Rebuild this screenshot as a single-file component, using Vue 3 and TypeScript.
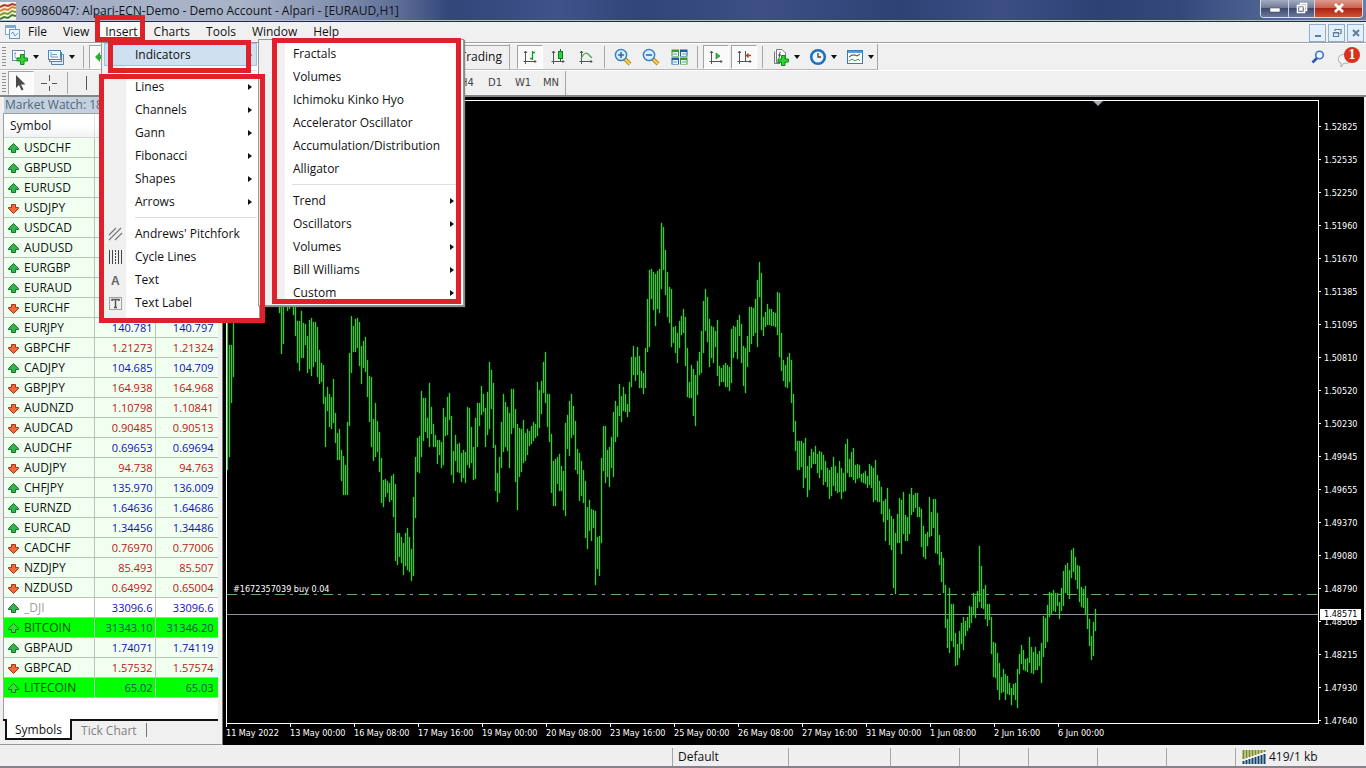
<script setup lang="ts">
type Row = { symbol: string; up: boolean; bid: string; ask: string; tone?: 'muted' | 'lit' }

const row = (symbol: string, up: boolean, bid = '', ask = '', tone?: Row['tone']): Row => ({ symbol, up, bid, ask, tone })

const rows: Row[] = [
  row('USDCHF', true), row('GBPUSD', true), row('EURUSD', true), row('USDJPY', false),
  row('USDCAD', true), row('AUDUSD', true), row('EURGBP', true), row('EURAUD', true),
  row('EURCHF', false),
  row('EURJPY', true, '140.781', '140.797'),
  row('GBPCHF', false, '1.21273', '1.21324'),
  row('CADJPY', true, '104.685', '104.709'),
  row('GBPJPY', false, '164.938', '164.968'),
  row('AUDNZD', false, '1.10798', '1.10841'),
  row('AUDCAD', false, '0.90485', '0.90513'),
  row('AUDCHF', true, '0.69653', '0.69694'),
  row('AUDJPY', false, '94.738', '94.763'),
  row('CHFJPY', true, '135.970', '136.009'),
  row('EURNZD', true, '1.64636', '1.64686'),
  row('EURCAD', true, '1.34456', '1.34486'),
  row('CADCHF', false, '0.76970', '0.77006'),
  row('NZDJPY', false, '85.493', '85.507'),
  row('NZDUSD', false, '0.64992', '0.65004'),
  row('_DJI', true, '33096.6', '33096.6', 'muted'),
  row('BITCOIN', true, '31343.10', '31346.20', 'lit'),
  row('GBPAUD', true, '1.74071', '1.74119'),
  row('GBPCAD', false, '1.57532', '1.57574'),
  row('LITECOIN', true, '65.02', '65.03', 'lit'),
]

const menuBar = ['File', 'View', 'Insert', 'Charts', 'Tools', 'Window', 'Help']
const shapeItems = ['Lines', 'Channels', 'Gann', 'Fibonacci', 'Shapes', 'Arrows']
const toolItems = ["Andrews' Pitchfork", 'Cycle Lines', 'Text', 'Text Label']
const indicators = ['Fractals', 'Volumes', 'Ichimoku Kinko Hyo', 'Accelerator Oscillator', 'Accumulation/Distribution', 'Alligator']
const indicatorGroups = ['Trend', 'Oscillators', 'Volumes', 'Bill Williams', 'Custom']
const frames = ['H4', 'D1', 'W1', 'MN']

const prices = ['1.52825', '1.52535', '1.52250', '1.51960', '1.51670', '1.51385', '1.51095', '1.50810', '1.50520', '1.50230',
  '1.49945', '1.49655', '1.49370', '1.49080', '1.48790', '1.48505', '1.48215', '1.47930', '1.47640']
const times = ['11 May 2022', '13 May 00:00', '16 May 08:00', '17 May 16:00', '19 May 00:00', '20 May 08:00', '23 May 16:00',
  '25 May 00:00', '26 May 08:00', '27 May 16:00', '31 May 00:00', '1 Jun 08:00', '2 Jun 16:00', '6 Jun 00:00']

// High-low pairs per hour, two pixels apart; each run starts at its own x.
const runs: [number, string][] = [
  [227, '310-470 345-457 345-403 310-377'],
  [279, '290-313 290-354 290-344 290-306 290-311 290-309 290-306 306-315 290-336 321-363 321-371 311-358 323-358 324-345 336-373 320-369 318-376 322-367 322-362 327-377 350-384 363-382 365-404 397-447 387-411 394-427 397-429 379-423 413-443 433-460 429-460 450-481 456-495 465-495 422-495 353-426 316-373 326-352 319-352 318-348 322-366 346-384 341-368 337-372 360-397 376-422 377-447 419-461 403-457 421-452 432-472 458-503 480-507 479-497 481-493 483-502 476-500 474-517 484-561 533-565 533-557 537-563 543-575 533-566 528-570 537-572 549-581 497-576 457-518 438-472 436-473 391-457 398-441 398-432 418-438 383-447 407-434 424-447 435-447 440-464 440-455 442-468 408-465 417-436 397-435 393-420 416-475'],
  [453, '451-483 435-461 444-472 443-473 453-482 450-478 452-483 407-465 408-468 427-463 447-480 418-479 403-447 403-426 386-415 394-412 408-447 392-435 362-429 370-409 383-448 445-491 473-502 457-493 422-468 394-452 402-447 407-451 413-468 389-434 389-428 409-482 424-510 428-477 429-472 420-463 433-461 429-455 431-446 426-444 422-441 424-438 382-436 390-428 381-414 362-393 352-403 394-427 394-442 434-493 461-506 459-506 457-484 454-491 466-491 471-510 423-516 415-449 401-456 394-438 406-435 421-470 449-474 453-501 461-496 470-503 481-538 507-549 500-531 509-541 510-528 511-585 537-569 536-576 458-543 426-471 426-483 450-477 447-487 437-468 412-477 401-442 406-437 384-416 396-422 387-411 394-412 404-417 382-412 357-387 346-375 357-381 347-375 356-388 371-388 373-394 348-388 299-352 270-347 269-299 272-310 274-326 271-309 269-313 223-289 227-270 250-295 272-317 287-323 289-347 327-343 326-353 333-363 321-348 316-335 309-333 317-366 348-397 382-398 365-398 369-416 375-426 361-395 352-375 331-373 301-353 289-331 297-342 319-367 326-358 327-363 331-347 320-376 366-386 368-382 365-382 363-387 365-387 367-391 329-383 326-358 327-352 320-359 315-336 324-363 346-386 348-393 336-367 307-352 307-344 308-336 299-333 280-347 262-297 273-330 317-336 312-327 304-325 309-325 309-326 312-326 313-327 292-335 293-357 333-371 360-381 365-387 357-388 353-382 360-403 394-432 421-451 441-470 441-470 441-467 443-488 438-478 466-497 456-490 449-468 452-464 446-464 454-473 451-478 452-470 455-485 461-482 468-487 470-499 467-496 457-486 466-491 473-493 461-492 468-499 473-492 444-491 439-473 459-477 452-477 448-480 465-483 464-479 465-478 474-482 473-483 471-484 476-488 464-485 466-488 468-502 460-500 475-502 481-502 487-514 501-522 499-541 488-520 509-545 516-550 519-588 533-594 514-543 498-543 500-554 492-534 515-541 517-541 494-534 488-515 495-512 493-508 493-517 507-517 509-547 526-557 534-559 532-546 497-537 512-536 499-528 499-553 513-554 535-565 552-582 558-593 585-628 619-648 588-653 604-641 604-647 633-666 644-665 631-658 623-644 617-650 621-636 617-631 606-628 607-623 593-615 596-618 591-608 546-602 566-608 589-609 585-619 604-626 604-620 617-654 642-677 643-678 653-690 663-700 677-693 669-692 674-700 676-694 683-695 688-705 684-695 683-700 669-708 654-674 645-664 650-670 659-671 658-672 637-663 647-673 652-674 647-670 654-670 651-666 643-683 616-657 618-648 605-642 592-617 593-614 590-611 593-612 593-606 602-619 588-611 571-606 565-593 563-594 570-599 550-578 548-572 557-580 565-589 566-602 587-607 589-608 586-614 598-629 619-646 636-660 622-656 609-631'],
]

const bars = runs
  .map(([start, data]) => data.split(' ').map((pair, i) => {
    const [high, low] = pair.split('-')
    return `M${start + i * 2} ${high}h1V${low}h-1Z`
  }).join(''))
  .join('')
</script>

<template>
  <div class="app">
    <header class="title-bar">
      <svg class="logo" width="16" height="18" viewBox="0 0 16 18">
        <rect width="16" height="18" fill="#f6f3e4" />
        <g fill="none" stroke-width="2">
          <path d="M0 5l4-2 4 1 4-2 4 1" stroke="#b03a2c" />
          <path d="M0 9l4-2 4 1 4-3 4 1" stroke="#d8822f" />
          <path d="M0 13l4-2 4 1 4-3 4 1" stroke="#7f9a2c" />
          <path d="M0 17l4-2 4 1 4-3 4 1" stroke="#3f7d35" />
        </g>
      </svg>
      <span class="title">60986047: Alpari-ECN-Demo - Demo Account - Alpari - [EURAUD,H1]</span>
      <div class="win-buttons">
        <button class="min" aria-label="Minimize"><svg width="12" height="12" viewBox="0 0 12 12"><rect x="1" y="6" width="10" height="4" fill="#fff" stroke="#4a5064" stroke-width=".6" /></svg></button>
        <button class="max" aria-label="Restore"><svg width="12" height="12" viewBox="0 0 12 12"><path d="M4.500 3V1.500H10.500V8.500H9M1.500 3.500H8.500V10.500H1.500ZM4 6H6V8H4Z" fill="none" stroke="#fff" stroke-width="1.600" /></svg></button>
        <button class="close" aria-label="Close"><svg width="12" height="12" viewBox="0 0 12 12"><path d="M2 2L10 10M10 2L2 10" stroke="#fff" stroke-width="2.600" /></svg></button>
      </div>
    </header>

    <nav class="menu-bar">
      <svg class="doc-icon" width="15" height="15" viewBox="0 0 15 15">
        <rect x=".5" y=".5" width="10" height="9" fill="#fff" stroke="#7fa8cc" />
        <path d="M1 2H10" stroke="#7fa8cc" stroke-width="2" />
        <rect x="4.500" y="4.500" width="10" height="9" fill="#eaf4fc" stroke="#6c9ac4" />
        <path d="M6 9l2-2 2 4 3-3" fill="none" stroke="#6c9ac4" />
      </svg>
      <button v-for="m in menuBar" :key="m" :class="{ active: m === 'Insert' }">{{ m }}</button>
      <div class="mdi">
        <button aria-label="Minimize chart"><svg width="10" height="10" viewBox="0 0 10 10"><path d="M2 8H8" stroke="#5f7d99" stroke-width="2" /></svg></button>
        <button aria-label="Restore chart"><svg width="10" height="10" viewBox="0 0 10 10"><path d="M3 3V1.500H9V5.500H7.500M1.500 4.500H6.500V8.500H1.500ZM1.500 5H6.500" fill="none" stroke="#5f7d99" stroke-width="1.200" /></svg></button>
        <button aria-label="Close chart"><svg width="10" height="10" viewBox="0 0 10 10"><path d="M2 2L8 8M8 2L2 8" stroke="#5f7d99" stroke-width="2" /></svg></button>
      </div>
    </nav>

    <div class="toolbars">
      <div class="toolbar main">
        <div class="group file-group">
          <span class="grip"></span>
          <button class="drop" aria-label="New chart">
            <svg width="18" height="16" viewBox="0 0 18 16"><rect x="1.500" y="1.500" width="12" height="10" fill="#fff" stroke="#5d8cb8" /><path d="M4 3V9H12M3 4.500H5M10 8L11 9" fill="none" stroke="#8aa9c6" /><path d="M9.500 5.500H13V9H16.500V12H13V15.500H9.500V12H6V9H9.500Z" fill="#2fd52f" stroke="#0d8a1c" /></svg>
            <i class="caret"></i>
          </button>
          <button class="drop" aria-label="Profiles">
            <svg width="18" height="16" viewBox="0 0 18 16"><path d="M4.500 11V15.500H16.500V5.500H14" fill="#dcecf8" stroke="#5484ae" /><rect x="2.500" y="3.500" width="12" height="9" fill="#f4faff" stroke="#5484ae" /><rect x="1.500" y="1.500" width="12" height="9" fill="#f4faff" stroke="#5484ae" /><path d="M4 3V8H11M5 5.500H10" fill="none" stroke="#6a9ac6" /></svg>
            <i class="caret"></i>
          </button>
          <i class="rule"></i>
          <button class="pressed peek" aria-label="Market Watch"><svg width="16" height="16" viewBox="0 0 16 16"><path d="M1 8L6 3V6H10V10H6V13Z" fill="#28b02c" /></svg></button>
          <button class="trading">Trading</button>
        </div>
        <div class="group chart-group">
          <span class="grip"></span>
          <button class="pressed" aria-label="Bar chart"><svg width="16" height="16" viewBox="0 0 16 16"><path d="M3.500 2V15M1.500 12.500H14M2 4L3.500 2L5 4M12.500 11L14 12.500L12.500 14" fill="none" stroke="#555" /><path d="M10.500 2V11M8 9.500H10M11 3.500H13" stroke="#149a2c" stroke-width="1.300" /></svg></button>
          <button aria-label="Candlesticks"><svg width="16" height="16" viewBox="0 0 16 16"><path d="M3.500 2V15M1.500 12.500H14M2 4L3.500 2L5 4M12.500 11L14 12.500L12.500 14" fill="none" stroke="#555" /><path d="M10.500 0V12" stroke="#0b7a1a" /><rect x="8.500" y="2.500" width="4" height="7" fill="#2bd33a" stroke="#0b7a1a" /></svg></button>
          <button aria-label="Line chart"><svg width="16" height="16" viewBox="0 0 16 16"><path d="M3.500 2V15M1.500 12.500H14M2 4L3.500 2L5 4M12.500 11L14 12.500L12.500 14" fill="none" stroke="#555" /><path d="M3 10C6 3 9 3 11 6L14 9" fill="none" stroke="#4aa35a" stroke-width="1.300" /></svg></button>
          <i class="rule"></i>
          <button aria-label="Zoom in"><svg width="18" height="18" viewBox="0 0 18 18"><path d="M11 11L16 16" stroke="#b98a1d" stroke-width="4" /><path d="M11 11L16 16" stroke="#f2d056" stroke-width="2.200" /><circle cx="7" cy="7" r="5.600" fill="#d8efff" stroke="#3c80c4" stroke-width="1.500" /><path d="M4 7H10M7 4V10" stroke="#2b6cb4" stroke-width="1.600" /></svg></button>
          <button aria-label="Zoom out"><svg width="18" height="18" viewBox="0 0 18 18"><path d="M11 11L16 16" stroke="#b98a1d" stroke-width="4" /><path d="M11 11L16 16" stroke="#f2d056" stroke-width="2.200" /><circle cx="7" cy="7" r="5.600" fill="#d8efff" stroke="#3c80c4" stroke-width="1.500" /><path d="M4 7H10" stroke="#2b6cb4" stroke-width="1.600" /></svg></button>
          <button aria-label="Tile windows"><svg width="17" height="16" viewBox="0 0 17 16"><path d="M.5 .5H8V7.500H.5ZM9 8.500H16.500V15.500H9Z" fill="#3d9a2c" /><path d="M9 .5H16.500V7.500H9ZM.5 8.500H8V15.500H.5Z" fill="#1f5fa0" /><path d="M1.500 3H7V7H1.500ZM10 3H15.500V7H10ZM1.500 11H7V15H1.500ZM10 11H15.500V15H10Z" fill="#e8f2f8" /><path d="M2 5H6M11 5H15M2 13H6M11 13H15" stroke="#6fa0b8" /></svg></button>
          <i class="rule"></i>
          <button class="pressed" aria-label="Auto scroll"><svg width="16" height="16" viewBox="0 0 16 16"><path d="M3.500 2V15M1.500 12.500H14M2 4L3.500 2L5 4M12.500 11L14 12.500L12.500 14" fill="none" stroke="#555" /><path d="M8 4L12 7L8 10Z" fill="#2bc03a" stroke="#0b7a1a" stroke-width=".6" /></svg></button>
          <button class="pressed" aria-label="Chart shift"><svg width="16" height="16" viewBox="0 0 16 16"><path d="M3.500 2V15M1.500 12.500H15M2 4L3.500 2L5 4M13.500 11L15 12.500L13.500 14M9.500 2V12" fill="none" stroke="#555" /><path d="M15 6.500H11M12.500 4.500L10.500 6.500L12.500 8.500" fill="none" stroke="#b4441c" stroke-width="1.300" /></svg></button>
          <i class="rule"></i>
          <button class="drop" aria-label="Indicators"><svg width="18" height="18" viewBox="0 0 18 18"><path d="M4.500 1.500H10L13.500 5V14.500H4.500Z" fill="#fff" stroke="#777" /><path d="M2.500 3.500V15.500H8" fill="none" stroke="#777" /><path d="M9 4C7 4 8 7 7 10M6 7H9" fill="none" stroke="#444" /><path d="M9.500 7.500H13V11H16.500V14H13V17.500H9.500V14H6V11H9.500Z" fill="#2fd52f" stroke="#0d8a1c" /></svg><i class="caret"></i></button>
          <button class="drop" aria-label="Periods"><svg width="18" height="18" viewBox="0 0 18 18"><circle cx="9" cy="9" r="6.800" fill="#e8f5ff" stroke="#1f6fc0" stroke-width="2.600" /><path d="M9 5V9H12" fill="none" stroke="#5a3a20" stroke-width="1.300" /></svg><i class="caret"></i></button>
          <button class="drop" aria-label="Templates"><svg width="18" height="18" viewBox="0 0 18 18"><rect x="1.500" y="2.500" width="15" height="13" fill="#fff" stroke="#3d78b0" /><path d="M2 4H16" stroke="#5c9ad2" stroke-width="2" /><path d="M3 9L6 7H9L11 8L14 6" fill="none" stroke="#333" /><path d="M3 13L6 11L9 13L12 11L14 13" fill="none" stroke="#2f9a5a" /></svg><i class="caret"></i></button>
        </div>
        <div class="right-tools">
          <button aria-label="Search"><svg width="14" height="14" viewBox="0 0 14 14"><path d="M6 8L1.500 12.500" stroke="#2c55b0" stroke-width="2.600" /><circle cx="8.500" cy="5" r="3.800" fill="#eef6ff" stroke="#4170c8" stroke-width="1.600" /></svg></button>
          <button class="chat" aria-label="Notifications"><svg width="16" height="16" viewBox="0 0 16 16"><path d="M2 5C4 1 14 1 15 6C15 10 11 12 7 11L4 15L4 11C1 10 1 7 2 5Z" fill="#f3f3f3" stroke="#a9a9a9" /></svg><b>1</b></button>
        </div>
      </div>
      <div class="toolbar second">
        <div class="group line-group">
          <span class="grip"></span>
          <button class="pressed" aria-label="Cursor"><svg width="12" height="16" viewBox="0 0 12 16"><path d="M1 0V13L4 10L6.500 15.500L8.500 14.500L6 9.500H10.500Z" fill="#4a4a4a" /></svg></button>
          <button aria-label="Crosshair"><svg width="16" height="16" viewBox="0 0 16 16"><path d="M8.500 0V6M8.500 11V16M0 8.500H6M11 8.500H16" stroke="#555" /></svg></button>
          <i class="rule"></i>
          <button aria-label="Vertical line"><svg width="16" height="16" viewBox="0 0 16 16"><path d="M8.500 1V15" stroke="#555" /></svg></button>
          <div class="frames"><button v-for="f in frames" :key="f">{{ f }}</button></div>
        </div>
      </div>
    </div>

    <main class="work">
      <section class="watch">
        <h2>Market Watch: 18:</h2>
        <div class="sheet">
          <table>
            <colgroup><col class="c-sym"><col class="c-bid"><col></colgroup>
            <thead><tr><th scope="col">Symbol</th><th></th><th></th></tr></thead>
            <tbody>
              <tr v-for="r in rows" :key="r.symbol" :class="[r.up ? 'up' : 'down', r.tone]">
                <td>
                  <svg width="11" height="11" viewBox="0 0 11 11">
                    <path v-if="r.up" d="M5.500 .5L10.500 5.500V6.500H7.500V9.500H3.500V6.500H.5V5.500Z" :fill="r.tone === 'lit' ? '#35e035' : '#34b34a'" stroke="#14742a" />
                    <path v-else d="M5.500 10.500L10.500 5.500V4.500H7.500V1.500H3.500V4.500H.5V5.500Z" fill="#f0693a" stroke="#a93413" />
                  </svg>{{ r.symbol }}
                </td>
                <td>{{ r.bid }}</td>
                <td>{{ r.ask }}</td>
              </tr>
            </tbody>
          </table>
        </div>
        <div class="tabs">
          <button class="on">Symbols</button>
          <button>Tick Chart</button>
          <i></i>
        </div>
      </section>

      <section class="chart">
        <div class="plot">
          <svg width="100%" height="100%">
            <g transform="translate(-227 -101)" fill="none">
              <path d="M227 594.500H1318" stroke="#5fb45f" stroke-dasharray="10 5 3 6" />
              <path d="M227 614.500H1318" stroke="#8c939c" />
              <path :d="bars" class="bars" />
              <path d="M1093 101H1103L1098 106Z" fill="#a2a8ae" />
            </g>
          </svg>
          <span class="order">#1672357039 buy 0.04</span>
        </div>
        <div class="price-axis">
          <span v-for="p in prices" :key="p">{{ p }}</span>
          <b>1.48571</b>
        </div>
        <div class="time-axis"><span v-for="t in times" :key="t">{{ t }}</span></div>
      </section>
    </main>

    <footer class="status">
      <span class="s-help"></span>
      <span class="s-profile">Default</span>
      <span class="s-date"></span>
      <span class="s-val"></span>
      <span class="s-val"></span>
      <span class="s-val"></span>
      <span class="s-val"></span>
      <span class="s-val"></span>
      <span class="s-net">
        <svg width="24" height="14" viewBox="0 0 24 14">
          <path d="M1.500 0V9M4.500 0V8M7.500 0V7M10.500 0V6M13.500 0V5M16.500 0V4M19.500 0V3M22.500 0V2" stroke="#7c8a1e" stroke-width="2" />
          <path d="M1.500 11V14M4.500 10V14M7.500 9V14M10.500 8V14M13.500 7V14M16.500 6V14M19.500 5V14M22.500 4V14" stroke="#12456e" stroke-width="2" />
        </svg>
        419/1 kb
      </span>
    </footer>

    <div class="menu insert-menu" role="menu">
      <button role="menuitem" class="hot">Indicators<i class="arrow"></i></button>
      <hr>
      <button v-for="s in shapeItems" :key="s" role="menuitem">{{ s }}<i class="arrow"></i></button>
      <hr>
      <button v-for="(t, i) in toolItems" :key="t" role="menuitem">
        <svg width="16" height="16" viewBox="0 0 16 16">
          <g v-if="i === 0" stroke="#777" stroke-width="1.200"><path d="M2 9L9 2M2 14L14 2M8 14L15 7" /></g>
          <g v-else-if="i === 1" stroke="#444"><path d="M2.500 1V15M5.500 1V15M11.500 1V15M14.500 1V15" /><path d="M8.500 1V15" stroke-dasharray="2 1" /></g>
          <text v-else-if="i === 2" x="4" y="13" class="glyph">A</text>
          <g v-else><rect x="2.500" y="2.500" width="12" height="12" fill="none" stroke="#555" stroke-dasharray="1 1" /><path d="M5 6V4.500H12V6M8.500 4.500V12M7 12.500H10" fill="none" stroke="#555" stroke-width="1.500" /></g>
        </svg>{{ t }}
      </button>
    </div>
    <div class="menu sub-menu" role="menu">
      <button v-for="s in indicators" :key="s" role="menuitem">{{ s }}</button>
      <hr>
      <button v-for="s in indicatorGroups" :key="s" role="menuitem">{{ s }}<i class="arrow"></i></button>
    </div>

    <div class="mark m-insert"></div>
    <div class="mark m-indicators"></div>
    <div class="mark m-objects"></div>
    <div class="mark m-list"></div>
  </div>
</template>

<style>
html, body, #app { height: 100%; }
body { margin: 0; overflow: hidden; }
</style>

<style scoped>
.app {
  position: relative;
  display: flex;
  flex-direction: column;
  height: 100%;
  background: #f0f0f0;
  color: #111;
  font: 12px/16px "Open Sans", "Noto Sans", sans-serif;
}
.app * { box-sizing: border-box; }
button { font: inherit; color: inherit; border: 0; padding: 0; margin: 0; background: none; text-align: left; }
svg { display: block; flex: none; }

.title-bar {
  display: flex;
  flex: none;
  height: 22px;
  border-bottom: 1px solid #1d2b52;
  box-shadow: inset 0 -1px #b4bdd0;
  background: linear-gradient(90deg, #a3aec4 0, #a9b4c9 240px, #8592b1 330px, #5d6c96 400px, #32467a 450px, #3f528a 560px, #31457a 640px, #3d4f84 760px, #2f4276 900px, #3c4e84 1000px, #2e4175 1100px, #35487c 1180px, #4b5f8e 1250px, #6a7da4 100%);
}
.logo { margin-top: 2px; }
.title { padding: 3px 0 0 5px; color: #10131c; }
.win-buttons { display: flex; margin: 0 3px 0 auto; height: 18px; border: 1px solid #d7dce8; border-top: 0; border-radius: 0 0 4px 4px; overflow: hidden; }
.win-buttons button { display: grid; place-items: center; height: 17px; padding-bottom: 2px; background: linear-gradient(#a3acc0, #6d7893 48%, #3d4a6c 50%, #69789c); border-right: 1px solid #ccd2e0; }
.win-buttons .min { width: 28px; }
.win-buttons .max { width: 26px; }
.win-buttons .close { width: 47px; border: 0; background: linear-gradient(#dd9a8c, #c9604c 48%, #a92513 50%, #cf5237); }

.menu-bar { display: flex; align-items: center; flex: none; height: 20px; padding-left: 5px; background: #f0f0f0; }
.menu-bar > button { padding: 0 8px; line-height: 20px; }
.menu-bar > .active { background: #fafafa; }
.mdi { display: flex; gap: 2px; margin: 1px 2px 0 auto; }
.mdi button { display: grid; place-items: center; width: 17px; height: 18px; border: 1px solid #8fb0cc; background: #e3f0fa; }

.toolbars { flex: none; height: 55px; border-top: 1px solid #a0a0a0; border-bottom: 2px solid #858585; }
.toolbar { display: flex; height: 27px; border-top: 1px solid #fff; }
.toolbar.second { height: 25px; }
.group { display: flex; align-items: center; gap: 2px; padding-left: 2px; border-right: 1px solid #a6a6a6; border-bottom: 1px solid #b9b9b9; }
.file-group { width: 510px; }
.chart-group { width: 368px; padding-left: 4px; }
.chart-group .grip { margin-right: 1px; }
.line-group { width: 566px; border-bottom: 0; }
.grip { width: 4px; height: 20px; background: repeating-linear-gradient(#8f8f8f 0 1px, transparent 1px 3px); }
.group button { display: flex; align-items: center; justify-content: center; flex: none; width: 26px; height: 24px; }
.group button.pressed { border: 1px solid #a3a3a3; border-right-color: #fff; border-bottom-color: #fff; background: #fafafa; }
.group button.drop { width: 34px; gap: 4px; }
.chart-group button.drop { width: 35px; }
.caret { border: 3px solid transparent; border-top: 4px solid #111; border-bottom: 0; }
.rule { flex: none; width: 1px; height: 22px; margin: 0 3px; background: #a6a6a6; }
.group button.trading { width: auto; margin-left: auto; padding-right: 7px; border-top: 1px solid #a3a3a3; }
.frames { display: flex; margin-left: auto; font: 10px/14px "DejaVu Sans", sans-serif; color: #444; }
.frames button { width: 28px; }
.right-tools { display: flex; align-items: center; gap: 12px; margin: 0 6px 0 auto; }
.chat { position: relative; width: 23px; padding-top: 6px; }
.chat b { position: absolute; right: 0; top: 1px; width: 16px; height: 16px; border-radius: 50%; background: #d8321c; color: #fff; font: bold 14px/16px "Liberation Serif", serif; text-align: center; }

.work { display: flex; flex: 1; min-height: 0; }
.watch { display: flex; flex-direction: column; flex: none; width: 223px; padding: 0 4px 0 3px; border-right: 1px solid #777; border-bottom: 1px solid #9a9a9a; background: #f0f0f0; }
.watch h2 { margin: 0 0 0 1px; padding: 1px 0 0 1px; height: 16px; font-size: 12px; line-height: 14px; font-weight: 400; color: #53657a; background: #c3d0de; }
.sheet { flex: 1; min-height: 0; border: 1px solid #a0a0a0; border-width: 1px 0 0 1px; background: #fff; }
table { width: 100%; table-layout: fixed; border-collapse: collapse; }
.c-sym { width: 90px; }
.c-bid { width: 61px; }
th { height: 23px; padding: 1px 6px 0; font-weight: 400; text-align: left; background: linear-gradient(#fff 50%, #f1f2f4); border-bottom: 1px solid #d5d5d5; border-right: 1px solid #e0e0e0; }
td { height: 20px; padding: 0; border-bottom: 1px solid #b9c4b9; border-right: 1px solid #b9c4b9; background: #f0fff0; line-height: 19px; }
td:first-child svg { display: inline-block; margin: 0 5px 0 4px; vertical-align: -2px; }
td:not(:first-child) { padding-right: 2px; text-align: right; font-size: 11px; }
td:last-child { border-right: 0; padding-right: 4px; }
.up td:not(:first-child) { color: #1010b8; }
.down td:not(:first-child) { color: #c01616; }
.muted td { background: #fff; }
.muted td:first-child { color: #a0a0a0; }
.lit td { background: #0f0; }
.lit td:first-child { color: #0a4a0a; }
.lit td:not(:first-child) { color: #0a4a6a; }
.tabs { display: flex; align-items: flex-start; height: 25px; border-top: 2px solid #111; padding-left: 2px; color: #808080; }
.tabs button { height: 19px; padding: 0 9px; line-height: 16px; }
.tabs .on { margin-top: -2px; height: 21px; padding: 2px 8px 0; border: 2px solid #111; border-top: 0; background: #fff; color: #111; }
.tabs i { width: 1px; height: 14px; margin-top: 2px; background: #777; }

.chart { display: grid; grid-template: minmax(0, 1fr) 20px / minmax(0, 1fr) 45px; flex: 1; min-width: 0; margin-right: 2px; padding: 3px 0 1px 3px; background: #000; color: #fff; font: 9px/12px "DejaVu Sans Condensed", "DejaVu Sans", sans-serif; }
.plot { position: relative; min-width: 0; border: 1px solid #fff; overflow: hidden; }
.bars { fill: #32d732; stroke: #00e000; stroke-opacity: .3; }
.order { position: absolute; left: 6px; top: 482px; }
.price-axis { position: relative; display: flex; flex-direction: column; padding-top: 10px; }
.price-axis span { display: flex; align-items: center; gap: 3px; flex: none; height: 33px; }
.price-axis span::before { content: ""; width: 2px; height: 1px; background: #fff; }
.price-axis b { position: absolute; left: 1px; top: 509px; width: 41px; height: 11px; padding-left: 4px; background: #fff; color: #000; font-weight: 400; line-height: 11px; }
.time-axis { display: flex; grid-column: 1 / -1; }
.time-axis span { flex: none; width: 64px; white-space: nowrap; }
.time-axis span::before { content: ""; display: block; width: 1px; height: 3px; background: #fff; }

.status { display: flex; flex: none; height: 23px; padding-top: 3px; border-bottom: 2px solid #8b7f8a; background: #f0eff0; }
.status span { flex: none; height: 18px; border-right: 1px solid #a6a6a6; line-height: 18px; }
.s-help { width: 673px; }
.s-profile { width: 116px; padding-left: 5px; }
.s-date { width: 102px; }
.s-val { width: 69px; }
.status .s-net { display: flex; align-items: center; gap: 3px; padding-left: 6px; border: 0; }

.menu { position: absolute; display: flex; flex-direction: column; border: 1px solid #979797; background: linear-gradient(90deg, #f0f0f0 24px, #fff 24px); }
.insert-menu { left: 101px; top: 42px; width: 159px; padding: 0 2px 4px; }
.sub-menu { left: 258px; top: 39px; width: 206px; padding: 2px 2px 1px; background: linear-gradient(90deg, #f0f0f0 26px, #fff 26px); box-shadow: 1px 1px 1px #888; }
.menu button { display: flex; align-items: center; flex: none; height: 23px; padding-left: 31px; white-space: nowrap; }
.sub-menu button { padding-left: 32px; }
.menu button svg { margin: 0 12px 0 -28px; }
.menu .hot { background: #cfe0f0; box-shadow: inset 0 0 0 1px #9cc2e6; }
.menu hr { width: auto; height: 1px; margin: 4px 0 4px 31px; border: 0; background: #dedede; }
.arrow { margin: 0 5px 0 auto; border: 3px solid transparent; border-left: 4px solid #111; border-right: 0; }
.sub-menu .arrow { margin-right: 7px; }
.glyph { font: bold 12px "Liberation Sans", sans-serif; fill: #666; }

.mark { position: absolute; border: 5px solid #e0202a; pointer-events: none; }
.m-insert { left: 95px; top: 15px; width: 50px; height: 27px; }
.m-indicators { left: 108px; top: 40px; width: 143px; height: 33px; }
.m-objects { left: 99px; top: 74px; width: 166px; height: 249px; }
.m-list { left: 272px; top: 38px; width: 189px; height: 266px; }
</style>
